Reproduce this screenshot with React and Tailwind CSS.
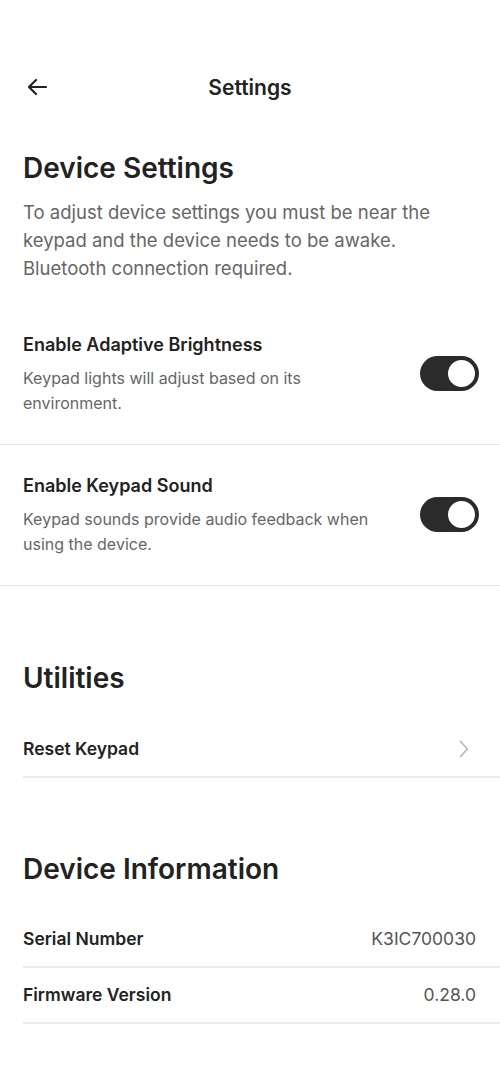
import React from 'react';

const font = { fontFamily: 'Inter, "Open Sans", sans-serif' };

function Toggle() {
    return (
        <div className="w-[59px] h-[35px] rounded-full bg-[#2b2b2b] flex items-center justify-end p-[2px] shrink-0">
            <div className="w-[31px] h-[31px] rounded-full bg-white border-2 border-[#2b2b2b]" />
        </div>
    );
}

function ToggleRow({ title, text }) {
    return (
        <div className="pl-[23px] border-b border-[#e6e6e6]">
            <div className="flex items-center justify-between pr-[21px] pt-[27px] pb-[28px]">
                <div className="w-[360px]">
                    <p className="text-[18px] font-semibold text-[#222] leading-[28px]">{title}</p>
                    <p className="text-[16px] text-[#666] leading-[25px] mt-[7px]">{text}</p>
                </div>
                <Toggle />
            </div>
        </div>
    );
}

function InfoRow({ label, value }) {
    return (
        <div className="ml-[23px] border-b-2 border-[#ececec] flex items-center justify-between pr-[24px] h-[56px]">
            <span className="text-[17.5px] font-semibold text-[#222]">{label}</span>
            <span className="text-[17.5px] text-[#555]">{value}</span>
        </div>
    );
}

export default function App() {
    return (
        <div className="w-[500px] min-h-[1084px] bg-white pt-[59px]" style={font}>
            {/* header */}
            <div className="relative h-[58px] flex items-center justify-center">
                <svg className="absolute left-[27px] top-[19px]" width="20" height="18" viewBox="0 0 20 18" fill="none" stroke="#222" strokeWidth="2.2" strokeLinecap="round" strokeLinejoin="round">
                    <path d="M19 9H2M9 2L2 9l7 7" />
                </svg>
                <h1 className="text-[21px] font-semibold text-[#222]">Settings</h1>
            </div>

            <div className="px-[23px] pt-[33px]">
                <h2 className="text-[28px] font-semibold text-[#222] leading-[36px]">Device Settings</h2>
                <p className="text-[18.5px] text-[#666] leading-[28px] mt-[12px]">
                    To adjust device settings you must be near the keypad and the device needs to be awake. Bluetooth connection required.
                </p>
            </div>

            <div className="mt-[22px]">
                <ToggleRow title="Enable Adaptive Brightness" text="Keypad lights will adjust based on its environment." />
                <ToggleRow title="Enable Keypad Sound" text="Keypad sounds provide audio feedback when using the device." />
            </div>

            <div className="px-[23px] pt-[74px]">
                <h2 className="text-[28px] font-semibold text-[#222] leading-[36px]">Utilities</h2>
            </div>
            <div className="ml-[23px] mt-[26px] border-b-2 border-[#ececec] flex items-center justify-between pr-[31px] h-[56px]">
                <span className="text-[17.5px] font-semibold text-[#222]">Reset Keypad</span>
                <svg width="10" height="18" viewBox="0 0 10 18" fill="none" stroke="#b5b5b5" strokeWidth="1.6" strokeLinecap="round" strokeLinejoin="round">
                    <path d="M1.5 1.5L8.5 9l-7 7.5" />
                </svg>
            </div>

            <div className="px-[23px] pt-[73px]">
                <h2 className="text-[28px] font-semibold text-[#222] leading-[36px]">Device Information</h2>
            </div>
            <div className="mt-[25px]">
                <InfoRow label="Serial Number" value="K3IC700030" />
                <InfoRow label="Firmware Version" value="0.28.0" />
            </div>
        </div>
    );
}
